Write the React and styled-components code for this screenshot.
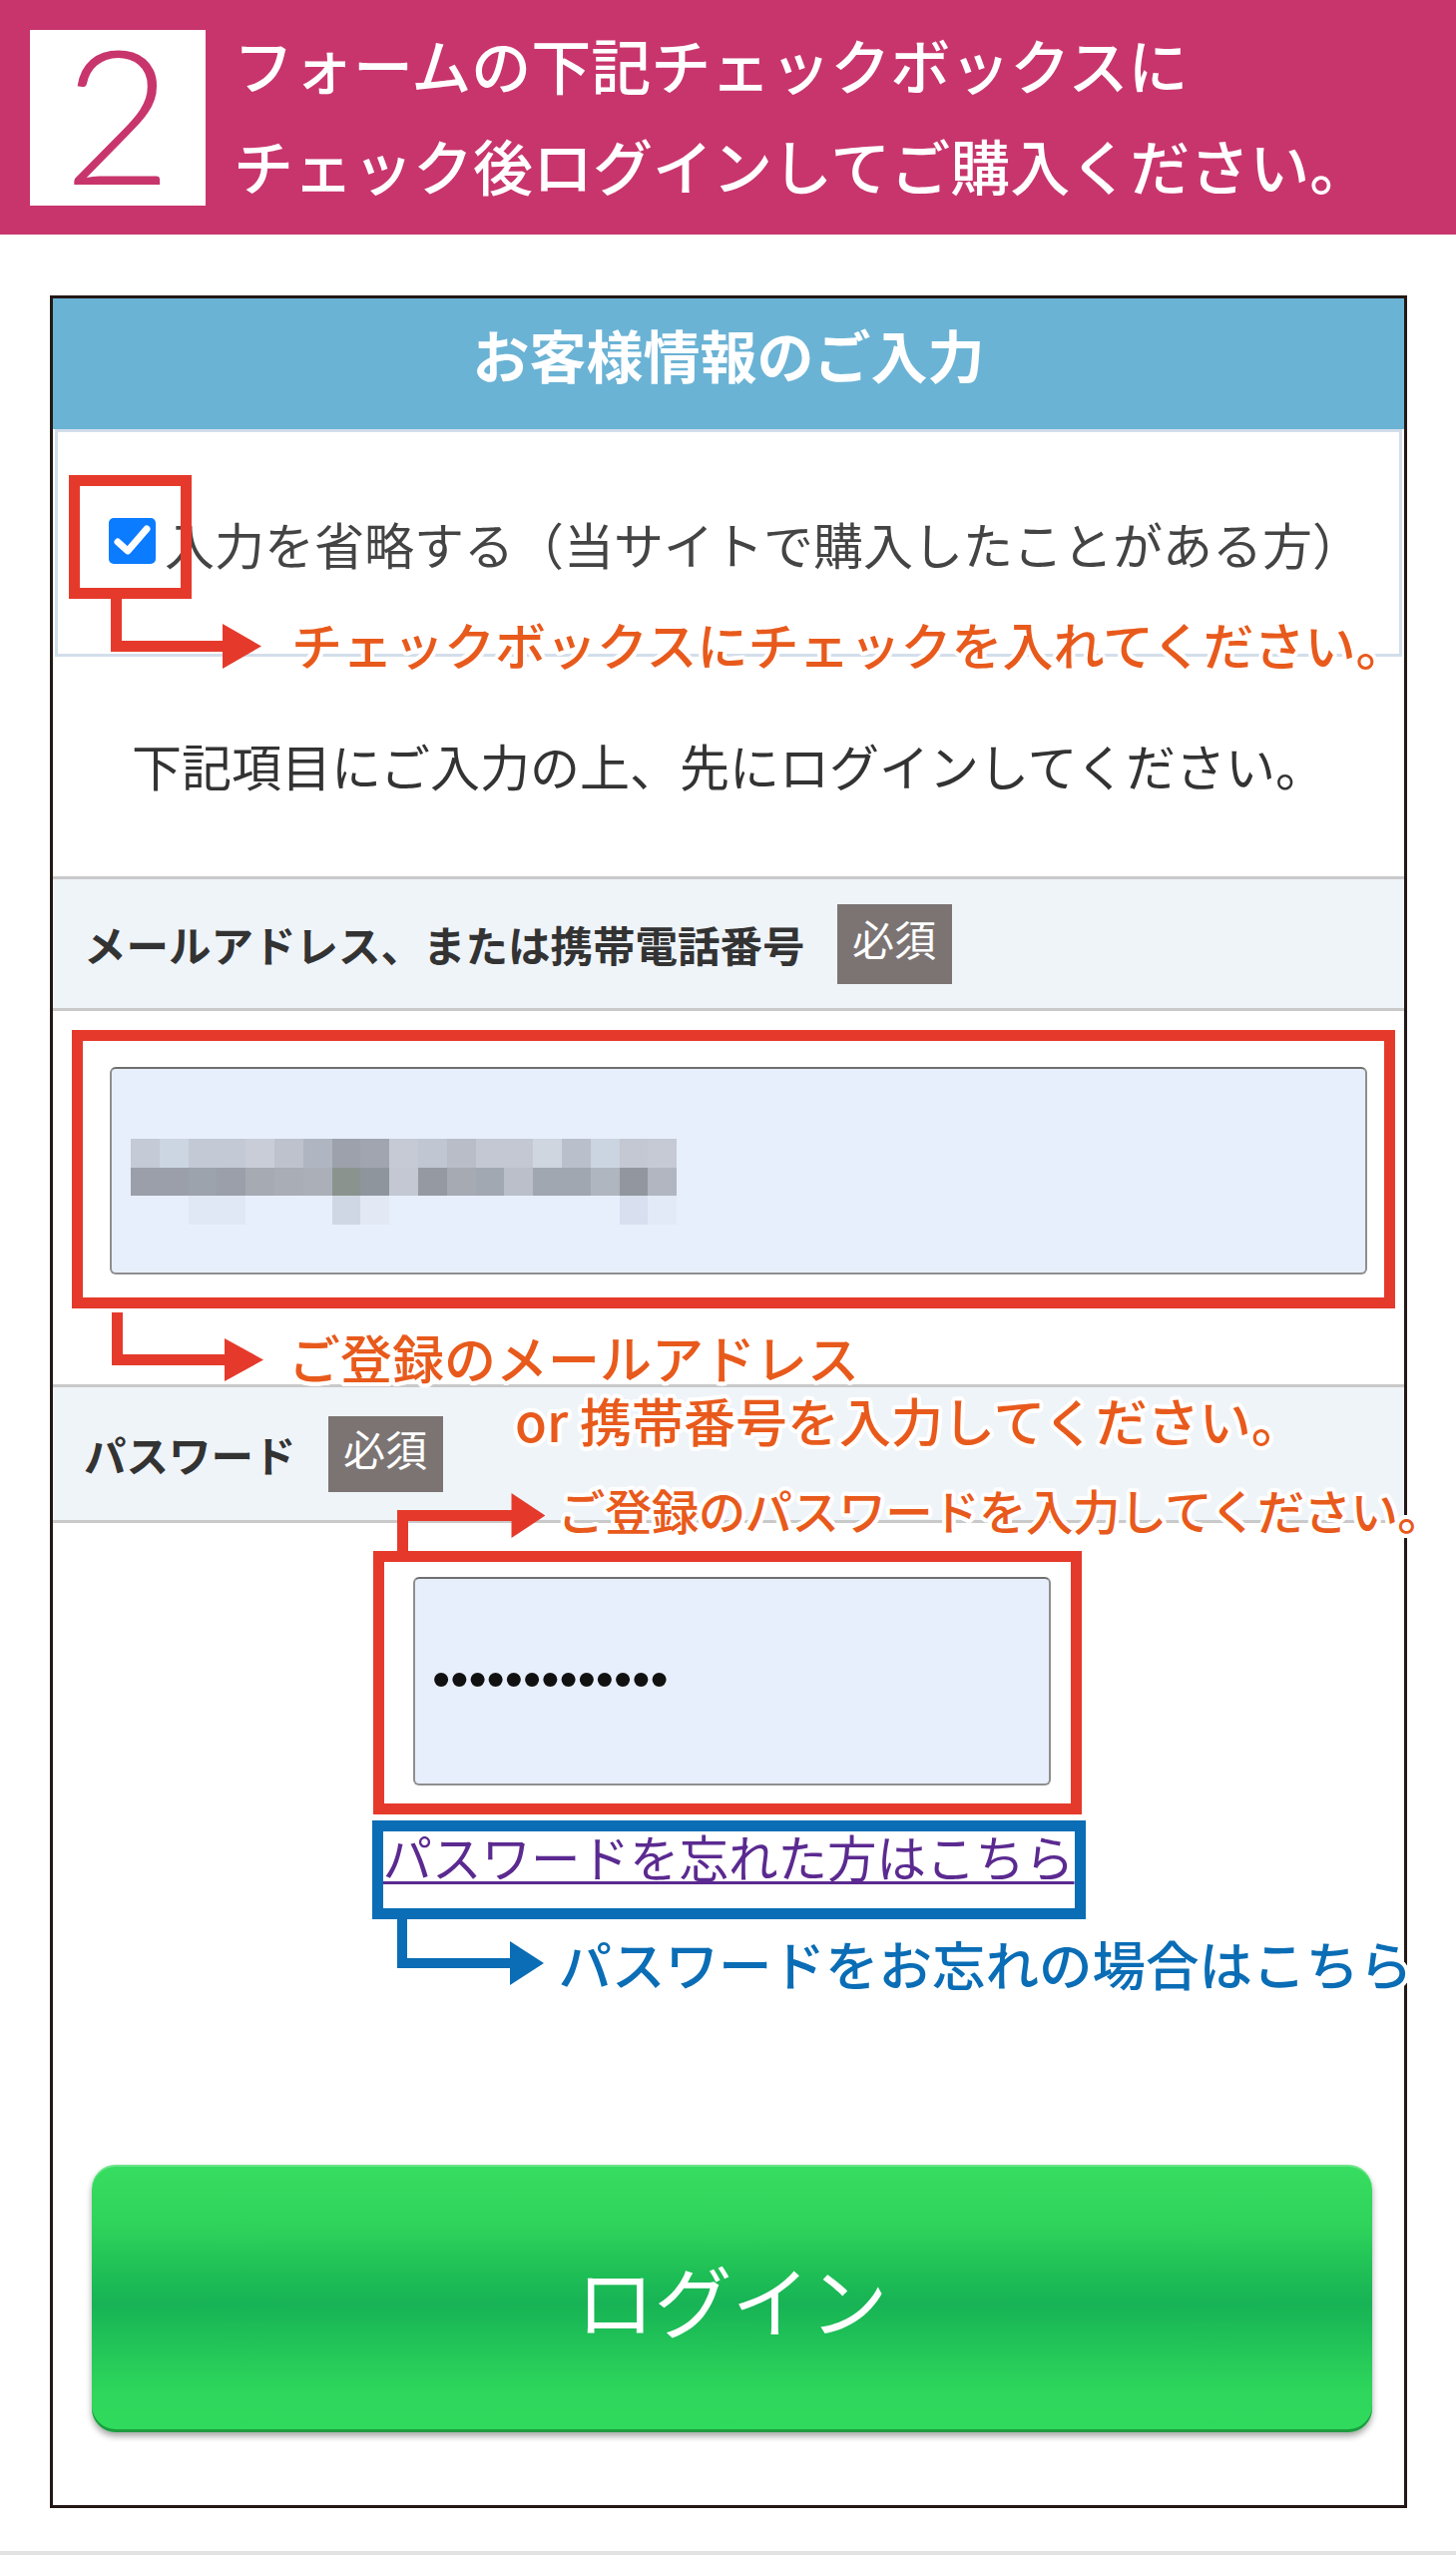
import React from 'react';
import styled, { createGlobalStyle } from 'styled-components';

const PINK = '#c8356c';
const RED = '#e53a2b';
const ORANGE = '#e85a1c';
const BLUE = '#0a6db5';

// white halo round the callout texts
const halo = Array.from({ length: 16 }, (_, i) => {
  const a = (i / 16) * Math.PI * 2;
  return `${(4 * Math.cos(a)).toFixed(1)}px ${(4 * Math.sin(a)).toFixed(1)}px 0 #fff`;
}).join(', ');

const GlobalStyle = createGlobalStyle`
  html, body {
    margin: 0;
    padding: 0;
    background: #fff;
  }
  body {
    font-family: "Noto Sans CJK JP", "Noto Sans", sans-serif;
  }
`;

const Page = styled.div`
  width: 1459px;
  height: 2560px;
  box-sizing: border-box;
  border-bottom: 4px solid #e2e2e2;
  overflow: hidden;
`;

const StepBar = styled.header`
  display: flex;
  align-items: center;
  height: 235px;
  padding-left: 30px;
  box-sizing: border-box;
  background: ${PINK};
`;

const StepNo = styled.div`
  display: flex;
  align-items: center;
  justify-content: center;
  width: 176px;
  height: 176px;
  padding-bottom: 12px;
  box-sizing: border-box;
  background: #fff;
  color: ${PINK};
  font-family: Lato, "Liberation Sans", sans-serif;
  font-weight: 300;
  font-size: 188px;
  line-height: 1;
`;

const StepText = styled.h1`
  margin: 0 0 8px 28px;
  color: #fff;
  font-size: 60px;
  font-weight: 500;
  line-height: 101px;
`;

const Panel = styled.section`
  width: 1360px;
  margin: 61px 0 0 50px;
  box-sizing: border-box;
  border: 3px solid #231815;
  background: #fff;
`;

const PanelTitle = styled.h2`
  margin: 0;
  height: 131px;
  padding-top: 21px;
  box-sizing: border-box;
  background: #6bb3d5;
  color: #fff;
  text-align: center;
  font-size: 57px;
  font-weight: 700;
  line-height: 68px;
`;

const SkipBox = styled.div`
  margin: 0 2px;
  padding: 84px 0 88px 51px;
  border: 3px solid #d3deeb;
`;

const CheckRow = styled.label`
  display: flex;
  align-items: center;
`;

const Check = styled.span`
  position: relative;
  display: block;
  width: 47px;
  height: 46px;
  flex: none;
`;

const CheckLabel = styled.span`
  margin: 4px 0 0 9px;
  color: #444;
  font-size: 50px;
  line-height: 46px;
  white-space: nowrap;
`;

const Lead = styled.p`
  margin: 0;
  padding: 78px 0 82px;
  color: #333;
  text-align: center;
  font-size: 50px;
  line-height: 60px;
`;

const FieldHead = styled.div`
  display: flex;
  align-items: center;
  gap: 32px;
  height: ${(p) => p.$h}px;
  padding-left: 31px;
  background: #eff4f9;
  border-top: 3px solid #c9c9c9;
  border-bottom: 3px solid #c9c9c9;
`;

const FieldLabel = styled.span`
  color: #333;
  font-size: 42.5px;
  font-weight: 700;
  line-height: 60px;
`;

const Required = styled.span`
  display: flex;
  align-items: center;
  justify-content: center;
  width: 115px;
  height: ${(p) => p.$h}px;
  padding-bottom: 12px;
  box-sizing: border-box;
  background: #7b7473;
  color: #fff;
  font-size: 42px;
  line-height: 1;
`;

const TextBox = styled.div`
  position: relative;
  height: 208px;
  margin: 56px 37px 110px 57px;
  padding: 70px 0 0 19px;
  box-sizing: border-box;
  border: 2px solid #8e8e8e;
  border-top-color: #6f6f6f;
  border-radius: 6px;
  background: #e8effc;
`;

const Mosaic = styled.div`
  display: grid;
  grid-template-columns: repeat(19, 28.8px);
  grid-auto-rows: 28.7px;
  width: fit-content;
`;

const Tile = styled.span`
  background: ${(p) => p.$c || 'transparent'};
`;

const PasswordBox = styled.div`
  position: relative;
  display: flex;
  align-items: center;
  width: 639px;
  height: 209px;
  margin: 54px 0 0 361px;
  padding: 0 0 6px 17px;
  box-sizing: border-box;
  border: 2px solid #8e8e8e;
  border-top-color: #6f6f6f;
  border-radius: 6px;
  background: #e8effc;
`;

const Dots = styled.span`
  color: #111;
  font-family: "Liberation Sans", Arial, sans-serif;
  font-size: 52px;
  line-height: 1;
`;

const LinkRow = styled.div`
  margin-top: 41px;
  text-align: center;
`;

const LinkBox = styled.span`
  position: relative;
  display: inline-block;
  font-size: 49.5px;
  line-height: 60px;
`;

const ForgotLink = styled.a`
  color: #5b2a90;
  text-decoration: underline;
  text-decoration-thickness: 3px;
  text-underline-offset: 4px;
`;

const LoginButton = styled.button`
  display: block;
  width: calc(100% - 71px);
  height: 268px;
  margin: 279px 32px 73px 39px;
  border: 0;
  border-radius: 24px;
  background: linear-gradient(
    #37dd60 0%,
    #2fd45b 22%,
    #1fbf56 40%,
    #17b355 52%,
    #22c558 68%,
    #2ed65b 85%,
    #30db5d 100%
  );
  box-shadow: inset 0 2px 0 rgba(255, 255, 255, 0.25), inset 0 -3px 0 #1d9c3f,
    0 4px 6px rgba(0, 0, 0, 0.35);
  color: #fff;
  font-family: "Noto Sans CJK JP", sans-serif;
  font-size: 78px;
  font-weight: 400;
  line-height: 1;
`;

/* callout overlays: a frame round the target, and an arrow with its note */

const Frame = styled.span`
  position: absolute;
  top: ${(p) => -p.$t}px;
  left: ${(p) => -p.$l}px;
  right: ${(p) => -p.$r}px;
  bottom: ${(p) => -p.$b}px;
  border: 11px solid ${(p) => p.$color};
  pointer-events: none;
  z-index: 2;
`;

const Callout = styled.div`
  position: absolute;
  left: ${(p) => p.$x}px;
  top: ${(p) => p.$y}px;
  display: flex;
  align-items: flex-start;
  white-space: nowrap;
  z-index: 3;
`;

const Note = styled.div`
  margin: ${(p) => p.$dy}px 0 0 ${(p) => p.$gap}px;
  color: ${(p) => p.$color};
  font-family: "Noto Sans CJK JP", sans-serif;
  font-size: ${(p) => p.$size}px;
  font-weight: 500;
  letter-spacing: ${(p) => p.$ls || 0}px;
  line-height: ${(p) => p.$lh || 60}px;
  text-align: left;
  text-decoration: none;
  text-shadow: ${halo};
`;

const NoteLine = styled.div`
  padding-left: ${(p) => p.$indent || 0}px;
`;

function ElbowArrow({ len, run, headW, headH, t = 11, color, up }) {
  const w = t / 2 + run + headW;
  const h = len + Math.max(t / 2, headH / 2);
  const x0 = t / 2;
  const hy = up ? h - len : len;
  const y0 = up ? h : 0;
  const bx = x0 + run;
  return (
    <svg width={w} height={h} viewBox={`0 0 ${w} ${h}`} style={{ flex: 'none' }}>
      <path
        d={`M${x0} ${y0} V${hy} H${bx + 1}`}
        fill="none"
        stroke={color}
        strokeWidth={t}
        strokeLinejoin="miter"
      />
      <polygon
        points={`${bx},${hy - headH / 2} ${bx + headW},${hy} ${bx},${hy + headH / 2}`}
        fill={color}
      />
    </svg>
  );
}

const ROW1 = [
  '#c4cad6', '#cbd6e2', '#c3c9d5', '#c3c9d5', '#c8cdd8', '#bdc2cd', '#b0b6c1',
  '#9ca1ab', '#a0a5af', '#c5cad5', '#c1c7d2', '#b8bdc8', '#c3c8d3', '#c3c8d3',
  '#d0d6e0', '#bac0cb', '#cad5e1', '#c3c8d3', '#c5cad5',
];
const ROW2 = [
  '#9a9fa9', '#9a9fa9', '#9ca3ac', '#9a9fa9', '#a6aab3', '#a9adb6', '#aaafb8',
  '#8b938e', '#8f959d', '#c3c8d3', '#959aa2', '#a6aab3', '#a2a8b1', '#babfca',
  '#a1a7b0', '#a1a7b0', '#b0b6c0', '#92979f', '#b1b6c0',
];
const ROW3 = [
  null, null, '#e1e8f5', '#e1e8f5', null, null, null, '#d0d7e4', '#e2e9f5',
  null, null, null, null, null, null, null, null, '#d8dfee', '#e2e9f7',
];

function CheckMark() {
  return (
    <svg width="47" height="46" viewBox="0 0 47 46">
      <rect width="47" height="46" rx="5" fill="#0b7bff" />
      <path
        d="M9 24 L19 33 L38 11"
        fill="none"
        stroke="#fff"
        strokeWidth="7"
        strokeLinecap="round"
        strokeLinejoin="round"
      />
    </svg>
  );
}

export default function App() {
  return (
    <Page>
      <GlobalStyle />
      <StepBar>
        <StepNo>2</StepNo>
        <StepText>
          フォームの下記チェックボックスに
          <br />
          チェック後ログインしてご購入ください。
        </StepText>
      </StepBar>

      <Panel>
        <PanelTitle>お客様情報のご入力</PanelTitle>

        <SkipBox>
          <CheckRow>
            <Check>
              <CheckMark />
              <Frame $color={RED} $t={43} $l={40} $r={36} $b={35} />
              <Callout $x={2} $y={81}>
                <ElbowArrow len={47.5} run={106.5} headW={39} headH={45} color={RED} />
                <Note $gap={30} $dy={15} $size={51} $color={ORANGE}>
                  チェックボックスにチェックを入れてください。
                </Note>
              </Callout>
            </Check>
            <CheckLabel>入力を省略する（当サイトで購入したことがある方）</CheckLabel>
          </CheckRow>
        </SkipBox>

        <Lead>下記項目にご入力の上、先にログインしてください。</Lead>

        <FieldHead $h={129}>
          <FieldLabel>メールアドレス、または携帯電話番号</FieldLabel>
          <Required $h={80}>必須</Required>
        </FieldHead>

        <TextBox>
          <Mosaic>
            {[ROW1, ROW2, ROW3].map((row, r) =>
              row.map((c, i) => <Tile key={`${r}-${i}`} $c={c} />)
            )}
          </Mosaic>
          <Frame $color={RED} $t={39} $l={40} $r={30} $b={36} />
          <Callout $x={0} $y={244}>
            <ElbowArrow len={47.5} run={107.5} headW={39} headH={43} color={RED} />
            <Note $gap={25} $dy={13} $size={52} $lh={63} $color={ORANGE}>
              <NoteLine>ご登録のメールアドレス</NoteLine>
              <NoteLine $indent={227}>or 携帯番号を入力してください。</NoteLine>
            </Note>
          </Callout>
        </TextBox>

        <FieldHead $h={133}>
          <FieldLabel>パスワード</FieldLabel>
          <Required $h={76}>必須</Required>
        </FieldHead>

        <PasswordBox>
          <Dots>•••••••••••••</Dots>
          <Frame $color={RED} $t={28} $l={42} $r={33} $b={31} />
          <Callout $x={-18.5} $y={-86}>
            <ElbowArrow len={35.5} run={109} headW={34} headH={45} color={RED} up />
            <Note $gap={13} $dy={-13} $size={47.5} $ls={-0.6} $color={ORANGE}>
              ご登録のパスワードを入力してください。
            </Note>
          </Callout>
        </PasswordBox>

        <LinkRow>
          <LinkBox>
            <ForgotLink href="#">パスワードを忘れた方はこちら</ForgotLink>
            <Frame $color={BLUE} $t={6} $l={11} $r={11} $b={33} />
            <Callout $x={14} $y={93}>
              <ElbowArrow len={44} run={108} headW={34} headH={44} t={10} color={BLUE} />
              <Note $gap={15} $dy={14} $size={53.5} $color={BLUE}>
                パスワードをお忘れの場合はこちら
              </Note>
            </Callout>
          </LinkBox>
        </LinkRow>

        <LoginButton type="button">ログイン</LoginButton>
      </Panel>
    </Page>
  );
}
